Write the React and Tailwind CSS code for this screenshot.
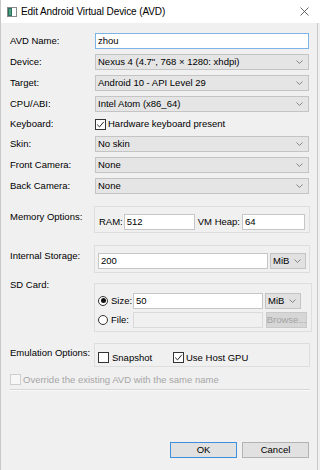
import React from 'react';

const Chevron = () => (
  <svg width="7" height="4" viewBox="0 0 7 4" className="shrink-0">
    <path d="M0.5 0.5 L3.5 3.5 L6.5 0.5" fill="none" stroke="#7a7a7a" strokeWidth="0.9" />
  </svg>
);

const Select = ({ value, className = '' }) => (
  <div className={`flex items-center justify-between h-[16px] bg-[#e5e5e5] border border-[#c4c4c4] pl-[2px] pr-[5px] ${className}`}>
    <span className="leading-none">{value}</span>
    <Chevron />
  </div>
);

const Input = ({ value = '', className = '', focused = false, disabled = false }) => (
  <div
    className={`flex items-center h-[16px] border pl-[2px] leading-none ${
      focused ? 'border-[#7db4e8]' : 'border-[#c6c6c6]'
    } ${disabled ? 'bg-[#f0f0f0] border-[#dadada]' : 'bg-white'} ${className}`}
  >
    {value}
  </div>
);

const Checkbox = ({ checked = false, disabled = false }) => (
  <div
    className={`w-[11px] h-[11px] shrink-0 flex items-center justify-center border ${
      disabled ? 'border-[#cfcfcf] bg-[#f7f7f7]' : 'border-[#333] bg-white'
    }`}
  >
    {checked && (
      <svg width="9" height="9" viewBox="0 0 9 9">
        <path d="M1.2 4.6 L3.5 6.9 L7.8 1.8" fill="none" stroke="#222" strokeWidth="1" />
      </svg>
    )}
  </div>
);

const Radio = ({ checked = false }) => (
  <div className="w-[10px] h-[10px] shrink-0 rounded-full border border-[#333] bg-white flex items-center justify-center">
    {checked && <div className="w-[5px] h-[5px] rounded-full bg-[#111]" />}
  </div>
);

const Row = ({ label, children, className = 'h-[16px]' }) => (
  <div className={`flex items-center ${className}`}>
    <div className="w-[85px] shrink-0">{label}</div>
    <div className="flex-1 flex items-center">{children}</div>
  </div>
);

const GroupRow = ({ label, labelClass, children }) => (
  <div className="flex items-start">
    <div className={`w-[84px] shrink-0 leading-[10px] ${labelClass}`}>{label}</div>
    <div className="flex-1 mr-[-1px] border border-[#dedede]">{children}</div>
  </div>
);

const MiB = ({ className = '' }) => (
  <div className={`flex items-center justify-between h-[16px] w-[36px] shrink-0 bg-[#e1e1e1] border border-[#c4c4c4] pl-[2px] pr-[4px] ${className}`}>
    <span className="leading-none">MiB</span>
    <Chevron />
  </div>
);

export default function App() {
  return (
    <div className="w-[320px] h-[470px] bg-[#f0f0f0] flex flex-col overflow-hidden text-[9.5px] text-black font-['Liberation_Sans',Arial,sans-serif]">
      {/* Title bar */}
      <div className="h-[23px] shrink-0 bg-white flex items-center border-l border-[#c8c8c8]">
        <div className="w-[20px] flex justify-center pl-[2px]">
          <svg width="10" height="10" viewBox="0 0 10 10">
            <rect x="0.5" y="0.5" width="9" height="9" fill="#fff" stroke="#8a8a8a" />
            <rect x="1" y="1" width="4" height="8" fill="#2f6f63" />
            <rect x="2" y="2" width="2" height="6" fill="#49a37f" />
          </svg>
        </div>
        <span className="text-[10px] tracking-[-0.1px] leading-none">Edit Android Virtual Device (AVD)</span>
        <div className="ml-auto mr-[11px]">
          <svg width="9" height="9" viewBox="0 0 9 9">
            <path d="M0.5 0.5 L8.5 8.5 M8.5 0.5 L0.5 8.5" stroke="#555" strokeWidth="0.9" />
          </svg>
        </div>
      </div>

      {/* Body */}
      <div className="flex-1 w-[318px] flex flex-col border-l border-r border-[#c8c8c8] pt-[10px] pl-[9px] pr-[8px] pb-[12px]">
        <div className="flex flex-col gap-[5px]">
          <Row label="AVD Name:">
            <Input value="zhou" className="flex-1" focused />
          </Row>
          <Row label="Device:">
            <Select value={'Nexus 4 (4.7", 768 × 1280: xhdpi)'} className="flex-1" />
          </Row>
          <Row label="Target:">
            <Select value="Android 10 - API Level 29" className="flex-1" />
          </Row>
          <Row label="CPU/ABI:">
            <Select value="Intel Atom (x86_64)" className="flex-1" />
          </Row>
          <Row label="Keyboard:" className="h-[14px]">
            <Checkbox checked />
            <span className="ml-[2px] leading-none">Hardware keyboard present</span>
          </Row>
          <Row label="Skin:">
            <Select value="No skin" className="flex-1" />
          </Row>
          <Row label="Front Camera:">
            <Select value="None" className="flex-1" />
          </Row>
          <Row label="Back Camera:">
            <Select value="None" className="flex-1" />
          </Row>
        </div>

        {/* Memory */}
        <div className="mt-[12px]">
          <GroupRow label="Memory Options:" labelClass="pt-[6px]">
            <div className="flex items-center pt-[7px] pb-[2px] pl-[4px] pr-[4px]">
              <span className="leading-none">RAM:</span>
              <Input value="512" className="w-[71px] ml-[1px]" />
              <span className="leading-none ml-[3px]">VM Heap:</span>
              <Input value="64" className="flex-1 ml-[2px]" />
            </div>
          </GroupRow>
        </div>

        {/* Internal storage */}
        <div className="mt-[12px]">
          <GroupRow label="Internal Storage:" labelClass="pt-[6px]">
            <div className="flex items-center gap-[2px] pt-[7px] pb-[3px] pl-[3px] pr-[3px]">
              <Input value="200" className="flex-1" />
              <MiB />
            </div>
          </GroupRow>
        </div>

        {/* SD card */}
        <div className="mt-[10px]">
          <GroupRow label="SD Card:" labelClass="mt-[-3px]">
            <div className="flex flex-col gap-[4px] pt-[9px] pb-[3px] pl-[3px] pr-[4px]">
              <div className="flex items-center h-[15px]">
                <div className="w-[35px] flex items-center gap-[3px]">
                  <Radio checked />
                  <span className="leading-none">Size:</span>
                </div>
                <Input value="50" className="w-[130px] h-[15px]" />
                <MiB className="ml-[2px] h-[15px]" />
              </div>
              <div className="flex items-center h-[16px]">
                <div className="w-[35px] flex items-center gap-[3px]">
                  <Radio />
                  <span className="leading-none">File:</span>
                </div>
                <Input className="w-[130px]" disabled />
                <div className="ml-[3px] w-[41px] h-[16px] flex items-center justify-center bg-[#d6d6d6] border border-[#c9c9c9] text-[#a3a3a3] leading-none">
                  Browse...
                </div>
              </div>
            </div>
          </GroupRow>
        </div>

        {/* Emulation */}
        <div className="mt-[11px]">
          <GroupRow label="Emulation Options:" labelClass="pt-[5px]">
            <div className="flex items-center pt-[8px] pb-[3px] pl-[3px]">
              <div className="w-[75px] flex items-center gap-[3px]">
                <Checkbox />
                <span className="leading-none">Snapshot</span>
              </div>
              <div className="flex items-center gap-[2px]">
                <Checkbox checked />
                <span className="leading-none">Use Host GPU</span>
              </div>
            </div>
          </GroupRow>
        </div>

        {/* Override */}
        <div className="mt-[7px] flex items-center gap-[2px]">
          <Checkbox disabled />
          <span className="leading-none text-[#a6a6a6]">Override the existing AVD with the same name</span>
        </div>

        <div className="mt-[4px] mr-[-1px] border-t border-[#d7d7d7] border-b border-b-[#fafafa]" />

        {/* Buttons */}
        <div className="mt-auto flex justify-end gap-[5px]">
          <button className="w-[67px] h-[16px] flex items-center justify-center bg-[#e1e1e1] border border-[#3f8ee0] leading-none">
            OK
          </button>
          <button className="w-[67px] h-[16px] flex items-center justify-center bg-[#e1e1e1] border border-[#b3b3b3] leading-none">
            Cancel
          </button>
        </div>
      </div>
    </div>
  );
}
